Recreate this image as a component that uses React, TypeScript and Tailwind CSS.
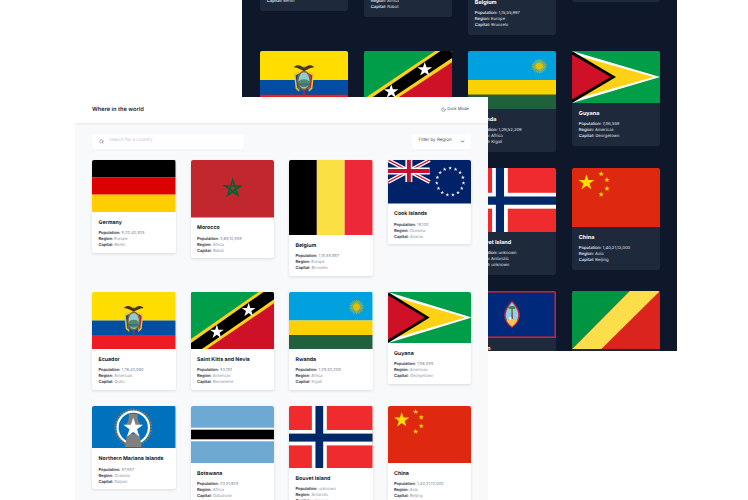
import { ChevronDown, Moon, Search } from "lucide-react";
import type { ReactNode } from "react";

const font = "font-['Inter','Liberation_Sans',sans-serif] antialiased [text-rendering:geometricPrecision]";

// five-pointed star as polygon points
function star(cx: number, cy: number, r: number) {
  const pts: string[] = [];
  for (let i = 0; i < 10; i++) {
    const rad = i % 2 === 0 ? r : r * 0.382;
    const a = -Math.PI / 2 + (i * Math.PI) / 5;
    pts.push(`${cx + rad * Math.cos(a)},${cy + rad * Math.sin(a)}`);
  }
  return pts.join(" ");
}

function Svg({ h, className, children }: { h: number; className: string; children: ReactNode }) {
  return (
    <svg viewBox={`0 0 84 ${h}`} preserveAspectRatio="none" className={`block w-full ${className}`}>
      {children}
    </svg>
  );
}

function Germany({ className }: { className: string }) {
  return (
    <Svg h={52} className={className}>
      <rect width="84" height="17.4" fill="#000" />
      <rect y="17.3" width="84" height="17.4" fill="#dd0000" />
      <rect y="34.6" width="84" height="17.4" fill="#ffce00" />
    </Svg>
  );
}

function Morocco({ className }: { className: string }) {
  return (
    <Svg h={57.6} className={className}>
      <rect width="84" height="57.6" fill="#c1272d" />
      <polygon
        points="42,20 46.9,35.2 34,25.8 50,25.8 37.1,35.2"
        fill="none"
        stroke="#006233"
        strokeWidth="1.6"
      />
    </Svg>
  );
}

function Belgium({ className }: { className: string }) {
  return (
    <Svg h={75} className={className}>
      <rect width="28" height="75" fill="#000" />
      <rect x="28" width="28" height="75" fill="#fae042" />
      <rect x="56" width="28" height="75" fill="#ed2939" />
    </Svg>
  );
}

function Cook({ className }: { className: string }) {
  const ring = Array.from({ length: 15 }, (_, i) => {
    const a = (i * 2 * Math.PI) / 15 - Math.PI / 2;
    return star(62.5 + 13.5 * Math.cos(a), 21.6 + 13.5 * Math.sin(a), 2);
  });
  return (
    <Svg h={43.5} className={className}>
      <rect width="84" height="43.5" fill="#012169" />
      <path d="M0 0L42 22M42 0L0 22" stroke="#fff" strokeWidth="4" />
      <path d="M0 0L42 22M42 0L0 22" stroke="#c8102e" strokeWidth="1.4" />
      <path d="M21 0V22M0 11H42" stroke="#fff" strokeWidth="7" />
      <path d="M21 0V22M0 11H42" stroke="#c8102e" strokeWidth="4" />
      {ring.map((p) => (
        <polygon key={p} points={p} fill="#fff" />
      ))}
    </Svg>
  );
}

function Ecuador({ className }: { className: string }) {
  return (
    <Svg h={57} className={className}>
      <rect width="84" height="28.5" fill="#ffdd00" />
      <rect y="28.5" width="84" height="14.5" fill="#034ea2" />
      <rect y="43" width="84" height="14" fill="#ed1c24" />
      {/* coat of arms */}
      <path d="M32 16C35 13 39 13.5 41.5 16.5L42 14.5L42.5 16.5C45 13.5 49 13 52 16C48 16.5 45 18 42 20C39 18 36 16.5 32 16Z" fill="#4a3426" />
      <path d="M32.5 22L37.5 20V40L34 37Z" fill="#e9c73a" />
      <path d="M51.5 22L46.5 20V40L50 37Z" fill="#e9c73a" />
      <path d="M34 24L37 22V38L35.4 36Z" fill="#0a4ea0" />
      <path d="M50 24L47 22V38L48.6 36Z" fill="#c8202c" />
      <ellipse cx="42" cy="29" rx="6.6" ry="9.6" fill="#8a5a2a" />
      <ellipse cx="42" cy="29" rx="5.2" ry="8" fill="#8fcbd0" />
      <path d="M37 30C39 27 45 27 47 30V33C45 36.6 39 36.6 37 33Z" fill="#4e8a6b" />
      <rect x="37.4" y="32" width="9.2" height="1.8" fill="#2b6f9e" />
      <path d="M41.3 38H42.7V44H41.3Z" fill="#c8202c" />
    </Svg>
  );
}

function StKitts({ className }: { className: string }) {
  return (
    <Svg h={57} className={className}>
      <rect width="84" height="57" fill="#ce1126" />
      <polygon points="0,0 84,0 0,57" fill="#009e49" />
      <polygon points="0,47 68,0 84,0 84,11 16,57 0,57" fill="#fcd116" />
      <polygon points="0,51 73,0 84,0 84,7 11,57 0,57" fill="#000" />
      <polygon points={star(58, 18.2, 7.4)} fill="#fff" />
      <polygon points={star(26, 40, 7.4)} fill="#fff" />
    </Svg>
  );
}

function Rwanda({ className }: { className: string }) {
  const rays = Array.from({ length: 24 }, (_, i) => {
    const a = (i * Math.PI) / 12;
    return `M${68 + 3 * Math.cos(a)} ${15 + 3 * Math.sin(a)}L${68 + 7 * Math.cos(a)} ${15 + 7 * Math.sin(a)}`;
  });
  return (
    <Svg h={57} className={className}>
      <rect width="84" height="28.5" fill="#00a1de" />
      <rect y="28.5" width="84" height="14.5" fill="#fad201" />
      <rect y="43" width="84" height="14" fill="#20603d" />
      <path d={rays.join("")} stroke="#e5be01" strokeWidth="0.7" />
      <circle cx="68" cy="15" r="3.4" fill="#e5be01" />
    </Svg>
  );
}

function Guyana({ className }: { className: string }) {
  return (
    <Svg h={52} className={className}>
      <rect width="84" height="52" fill="#009e49" />
      <polygon points="0,0 84,26 0,52" fill="#fff" />
      <polygon points="0,3 78,26 0,49" fill="#fcd116" />
      <polygon points="0,0 42,26 0,52" fill="#000" />
      <polygon points="0,3.4 37,26 0,48.6" fill="#ce1126" />
    </Svg>
  );
}

function Mariana({ className }: { className: string }) {
  return (
    <Svg h={42.5} className={className}>
      <rect width="84" height="42.5" fill="#0071bc" />
      <circle cx="41.5" cy="21.5" r="18" fill="none" stroke="#8a7a55" strokeWidth="2" strokeDasharray="1.6 1.2" />
      <circle cx="41.5" cy="21.5" r="15.8" fill="none" stroke="#fff" strokeWidth="2.2" />
      <path d="M37 8H46V12C46 15 48 17 49 19H34C35 17 37 15 37 12Z" fill="#808080" />
      <path d="M35.5 28H47.5L50 41H33Z" fill="#808080" />
      <polygon points={star(41.5, 22, 10.5)} fill="#fff" />
    </Svg>
  );
}

function Botswana({ className }: { className: string }) {
  return (
    <Svg h={57} className={className}>
      <rect width="84" height="57" fill="#6da9d2" />
      <rect y="21.7" width="84" height="13.6" fill="#fff" />
      <rect y="23.7" width="84" height="9.6" fill="#000" />
    </Svg>
  );
}

function Bouvet({ className }: { className: string }) {
  return (
    <Svg h={62} className={className}>
      <rect width="84" height="62" fill="#ef2b2d" />
      <rect x="23" width="15" height="62" fill="#fff" />
      <rect y="24" width="84" height="15.4" fill="#fff" />
      <rect x="26.6" width="7.8" height="62" fill="#002868" />
      <rect y="27.6" width="84" height="8" fill="#002868" />
    </Svg>
  );
}

function China({ className }: { className: string }) {
  return (
    <Svg h={57} className={className}>
      <rect width="84" height="57" fill="#de2910" />
      <polygon points={star(13.8, 14, 8)} fill="#ffde00" />
      <polygon points={star(27.8, 5.8, 2.8)} fill="#ffde00" />
      <polygon points={star(33.4, 11.4, 2.8)} fill="#ffde00" />
      <polygon points={star(33.4, 20, 2.8)} fill="#ffde00" />
      <polygon points={star(27.8, 25.6, 2.8)} fill="#ffde00" />
    </Svg>
  );
}

function Guam({ className }: { className: string }) {
  return (
    <Svg h={47} className={className}>
      <rect width="84" height="47" fill="#c62139" />
      <rect x="1.5" y="1.6" width="81" height="43.8" fill="#00297b" />
      <path d="M42 9.5C46 14 49.5 19 49.5 24C49.5 30 46 34 42 37C38 34 34.5 30 34.5 24C34.5 19 38 14 42 9.5Z" fill="#c62139" />
      <path d="M42 11.5C45 15 48 19.5 48 24C48 29 45 33 42 35.4C39 33 36 29 36 24C36 19.5 39 15 42 11.5Z" fill="#8fd0e6" />
      <path d="M41.6 17H42.6L43 28H41.2Z" fill="#7a5a36" />
      <ellipse cx="42" cy="16.6" rx="3.4" ry="1.6" fill="#2f8a3c" />
      <path d="M36.8 29H47.2C46.4 31 44.8 33.4 42 35.4C39.2 33.4 37.6 31 36.8 29Z" fill="#f2c35a" />
      <rect x="39.4" y="26" width="2" height="2.4" fill="#fff" />
    </Svg>
  );
}

function Congo({ className }: { className: string }) {
  return (
    <Svg h={58} className={className}>
      <rect width="84" height="58" fill="#dc241f" />
      <polygon points="0,58 55,0 84,0 28,58" fill="#fbde4a" />
      <polygon points="0,0 55,0 0,58" fill="#009543" />
    </Svg>
  );
}

type Country = {
  name: string;
  population: string;
  region: string;
  capital: string;
  Flag: (p: { className: string }) => ReactNode;
  lightH: string;
  darkH: string;
  darkClass?: string;
};

const countries: Country[] = [
  { name: "Germany", population: "8,32,40,525", region: "Europe", capital: "Berlin", Flag: Germany, lightH: "h-[52px]", darkH: "h-[55px]" },
  { name: "Morocco", population: "3,69,10,558", region: "Africa", capital: "Rabat", Flag: Morocco, lightH: "h-[57.5px]", darkH: "h-[61px]" },
  { name: "Belgium", population: "1,15,55,997", region: "Europe", capital: "Brussels", Flag: Belgium, lightH: "h-[75px]", darkH: "h-[79px]" },
  { name: "Cook Islands", population: "18,100", region: "Oceania", capital: "Avarua", Flag: Cook, lightH: "h-[43.5px]", darkH: "h-[46px]" },
  { name: "Ecuador", population: "1,76,43,060", region: "Americas", capital: "Quito", Flag: Ecuador, lightH: "h-[57px]", darkH: "h-[58px]" },
  { name: "Saint Kitts and Nevis", population: "53,192", region: "Americas", capital: "Basseterre", Flag: StKitts, lightH: "h-[57px]", darkH: "h-[58px]" },
  { name: "Rwanda", population: "1,29,52,209", region: "Africa", capital: "Kigali", Flag: Rwanda, lightH: "h-[57px]", darkH: "h-[58px]" },
  { name: "Guyana", population: "7,86,559", region: "Americas", capital: "Georgetown", Flag: Guyana, lightH: "h-[51px]", darkH: "h-[52px]" },
  { name: "Northern Mariana Islands", population: "57,557", region: "Oceania", capital: "Saipan", Flag: Mariana, lightH: "h-[42.5px]", darkH: "h-[45px]" },
  { name: "Botswana", population: "23,51,625", region: "Africa", capital: "Gaborone", Flag: Botswana, lightH: "h-[57px]", darkH: "h-[59px]" },
  { name: "Bouvet Island", population: "unknown", region: "Antarctic", capital: "unknown", Flag: Bouvet, lightH: "h-[62px]", darkH: "h-[64px]" },
  { name: "China", population: "1,40,21,12,000", region: "Asia", capital: "Beijing", Flag: China, lightH: "h-[57px]", darkH: "h-[59px]" },
];

const darkExtra: Country[] = [
  { name: "Guam", population: "1,68,783", region: "Oceania", capital: "Hagåtña", Flag: Guam, lightH: "h-[47px]", darkH: "h-[47px]", darkClass: "col-start-3" },
  { name: "Republic of the Congo", population: "55,18,092", region: "Africa", capital: "Brazzaville", Flag: Congo, lightH: "h-[58px]", darkH: "h-[58px]" },
];

function LightCard({ c }: { c: Country }) {
  return (
    <div className="overflow-hidden rounded-[2px] bg-white shadow-[0_1px_3px_rgba(0,0,0,0.12)]">
      <c.Flag className={c.lightH} />
      <div className="px-[6.5px] pt-[7.6px] pb-[5.1px]">
        <h3 className="mb-[3.4px] text-[5.25px] leading-[7.5px] font-bold whitespace-nowrap text-[#111827]">{c.name}</h3>
        <div className="text-[4px] leading-[5.8px] text-[#8b93a7]">
          <p><span className="font-semibold text-[#1f2937]">Population:</span> {c.population}</p>
          <p><span className="font-semibold text-[#1f2937]">Region:</span> {c.region}</p>
          <p><span className="font-semibold text-[#1f2937]">Capital:</span> {c.capital}</p>
        </div>
      </div>
    </div>
  );
}

function DarkCard({ c }: { c: Country }) {
  return (
    <div className={`overflow-hidden rounded-[2px] bg-[#1e293b] ${c.darkClass ?? ""}`}>
      <c.Flag className={c.darkH} />
      <div className="px-[6.8px] pt-[7.9px] pb-[5.6px]">
        <h3 className="mb-[3.6px] text-[5.5px] leading-[7.9px] font-bold whitespace-nowrap text-white">{c.name}</h3>
        <div className="text-[4.2px] leading-[6px] text-[#e2e8f0]">
          <p><span className="font-medium text-white">Population:</span> {c.population}</p>
          <p><span className="font-medium text-white">Region:</span> {c.region}</p>
          <p><span className="font-medium text-white">Capital:</span> {c.capital}</p>
        </div>
      </div>
    </div>
  );
}

export default function App() {
  return (
    <div className={`relative h-[500px] w-[748px] overflow-hidden bg-white ${font}`}>
      {/* dark mode screenshot, behind */}
      <div className="absolute top-0 left-[242px] h-[351px] w-[435px] overflow-hidden bg-[#0f172a]">
        <div className="-mt-[87px] ml-[18px] grid w-[400px] grid-cols-4 items-start gap-x-4 gap-y-4">
          {[...countries, ...darkExtra].map((c) => (
            <DarkCard key={c.name} c={c} />
          ))}
        </div>
      </div>

      {/* light mode screenshot, in front */}
      <div className="absolute top-[97px] left-[75px] flex h-[403px] w-[413px] flex-col overflow-hidden bg-[#f8f9fb]">
        <header className="flex h-[26px] shrink-0 items-center justify-between bg-white pr-[19px] pl-[17px] shadow-[0_1px_2px_rgba(0,0,0,0.08)]">
          <span className="text-[5.7px] font-semibold text-[#1f2937]">Where in the world</span>
          <span className="flex items-center gap-[1.5px] text-[4.2px] text-[#374151]">
            <Moon size={5} strokeWidth={2} />
            Dark Mode
          </span>
        </header>
        <main className="px-[17px] pt-[11px]">
          <div className="flex items-center justify-between">
            <div className="flex h-[15px] w-[152px] items-center gap-[5px] rounded-[1px] bg-white pl-[7px] shadow-[0_1px_2px_rgba(0,0,0,0.03)]">
              <Search size={5} className="text-[#6b7280]" strokeWidth={2.5} />
              <span className="text-[4.5px] text-[#c2c6ce]">Search for a country</span>
            </div>
            <div className="flex h-[15px] w-[59px] items-center justify-between rounded-[1px] bg-white pr-[6px] pl-[6.5px] shadow-[0_1px_2px_rgba(0,0,0,0.03)]">
              <span className="text-[4.5px] text-[#4b5563]">Filter by Region</span>
              <ChevronDown size={5} className="text-[#111827]" strokeWidth={3} />
            </div>
          </div>
          <div className="mt-[11px] grid grid-cols-4 items-start gap-x-[15px] gap-y-4">
            {countries.map((c) => (
              <LightCard key={c.name} c={c} />
            ))}
          </div>
        </main>
      </div>
    </div>
  );
}
